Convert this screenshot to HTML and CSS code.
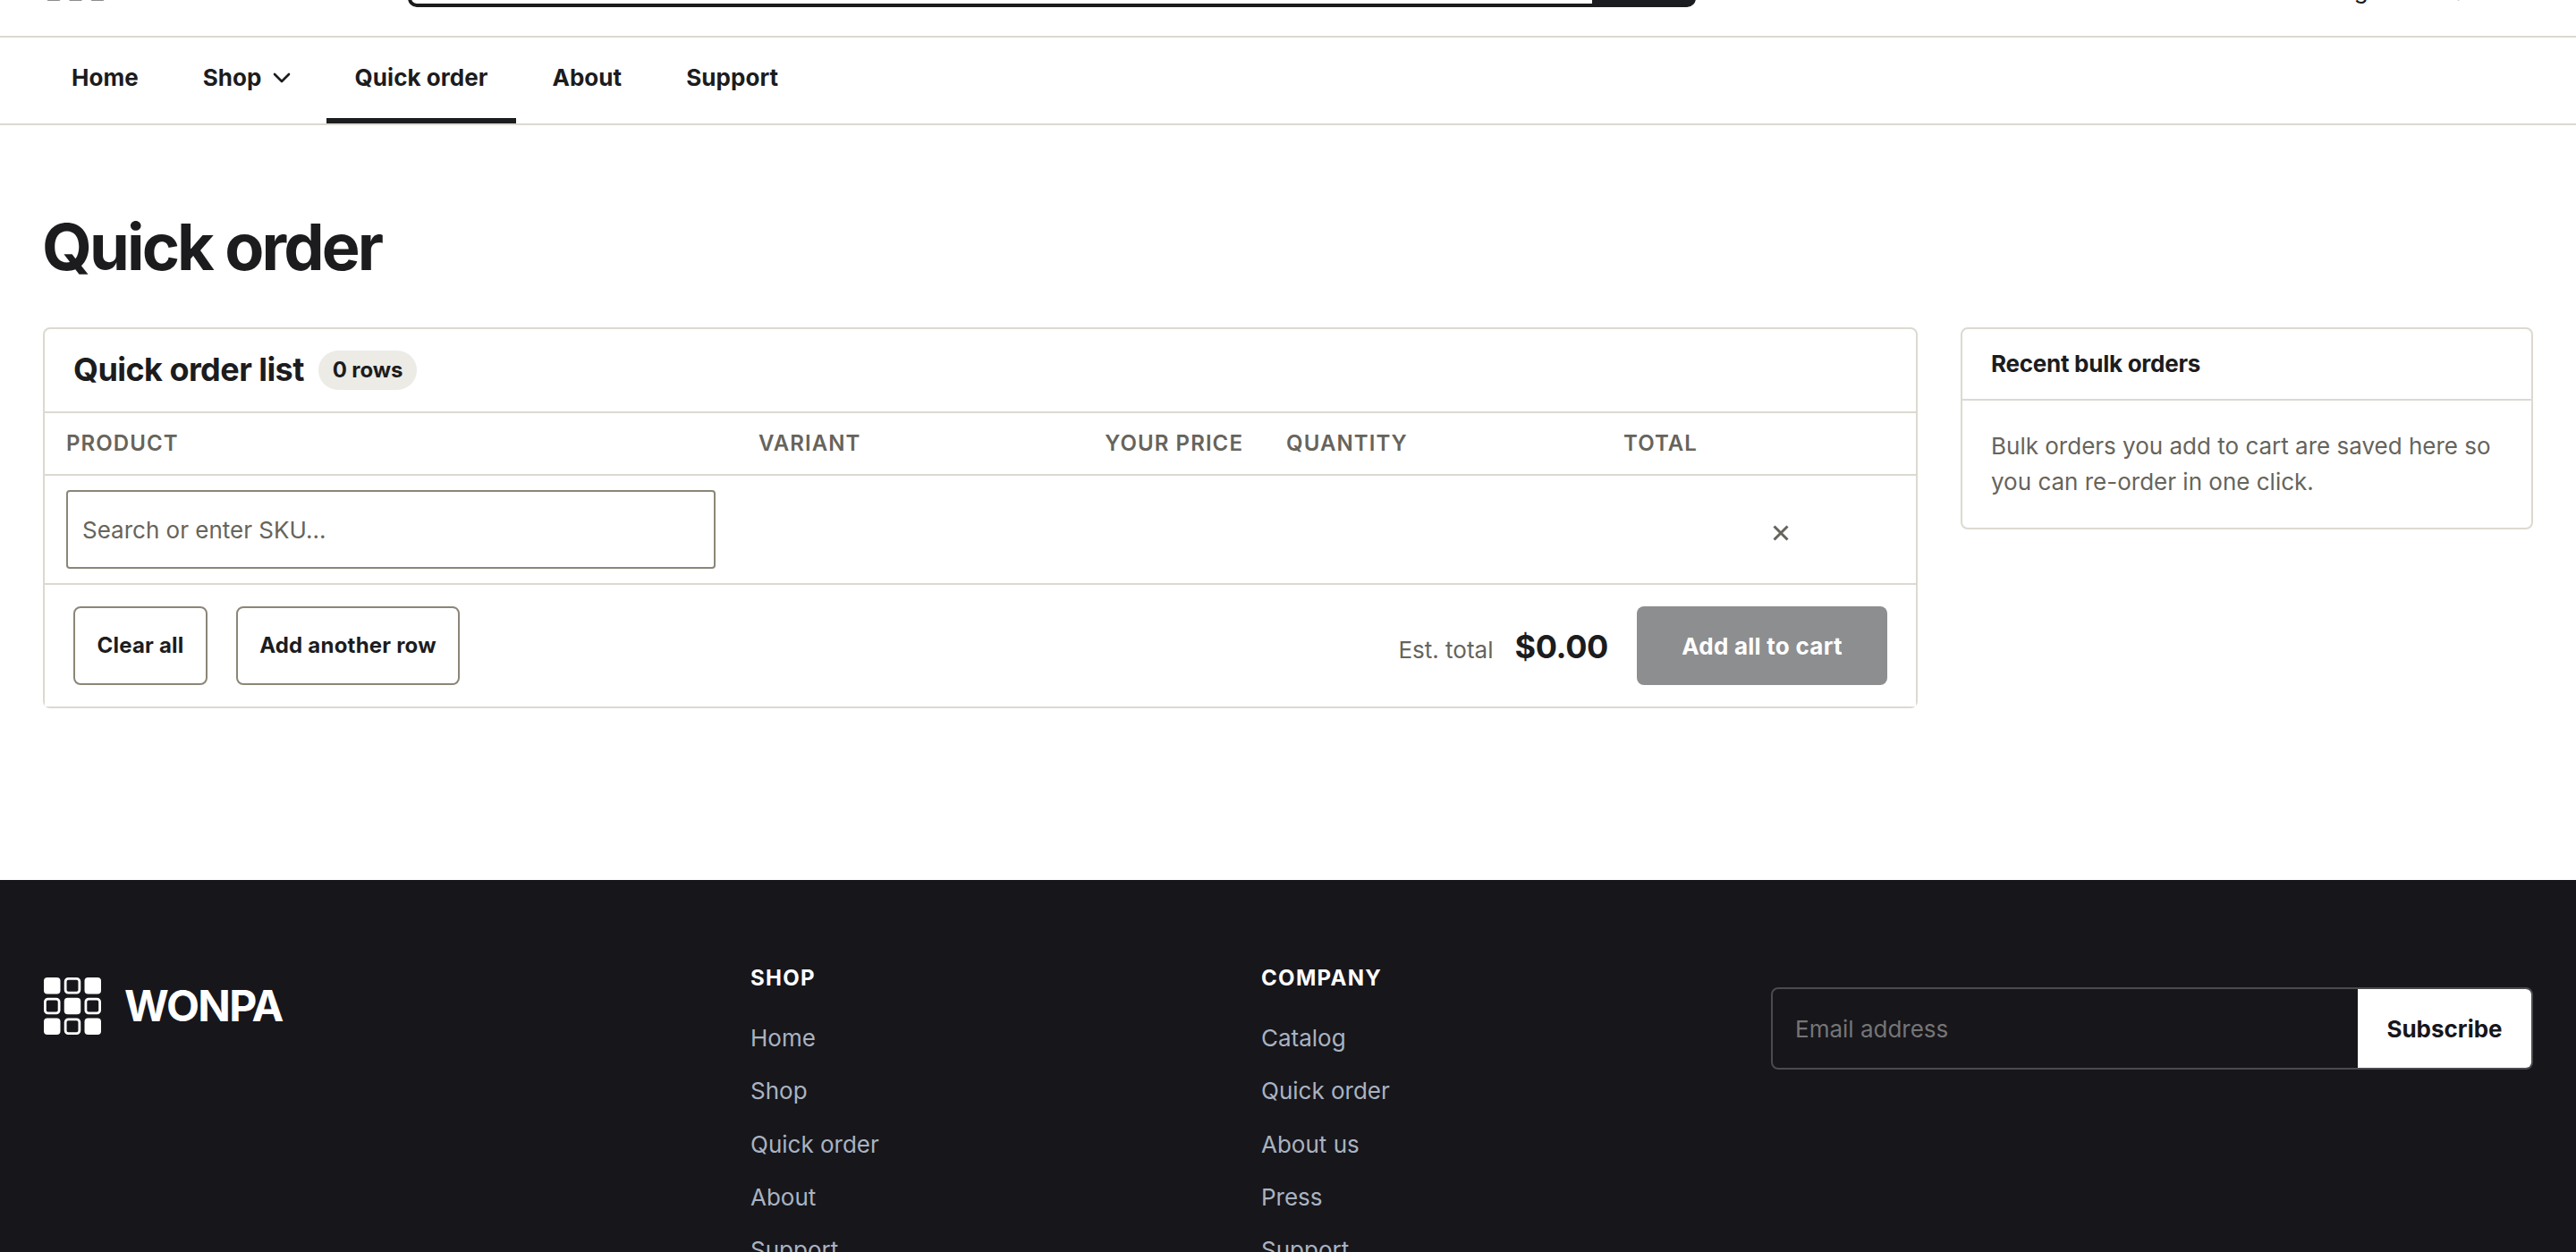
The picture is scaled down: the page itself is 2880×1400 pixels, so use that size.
FILE: index.html
```html
<!DOCTYPE html>
<html lang="en">
<head>
<meta charset="utf-8">
<title>Quick order – Wonpa</title>
<link rel="stylesheet" href="styles.css">
</head>
<body>
<header class="site-header">
  <div class="topbar">
    <svg class="topbar-mark" viewBox="0 0 72 74"><g fill="#1c1c1e"><rect x="3" y="54.600" width="18" height="18" rx="4"/><rect x="27.500" y="54.600" width="18" height="18" rx="4"/><rect x="52" y="54.600" width="18" height="18" rx="4"/></g></svg>
    <div class="search"><span class="search-button"></span></div>
    <div class="account"><span>Sign in</span><span class="cart-sum">$0.00</span></div>
  </div>
  <nav class="nav">
    <a class="nav-item">Home</a>
    <a class="nav-item">Shop<svg class="chevron" viewBox="0 0 24 24"><path d="M4 8l8 8 8-8" fill="none" stroke="currentColor" stroke-width="2.6" stroke-linecap="round" stroke-linejoin="round"/></svg></a>
    <a class="nav-item active">Quick order</a>
    <a class="nav-item">About</a>
    <a class="nav-item">Support</a>
  </nav>
</header>
<main class="page">
  <h1 class="page-title">Quick order</h1>
  <div class="columns">
    <section class="card order">
      <div class="order-head"><h2>Quick order list</h2><span class="badge">0 rows</span></div>
      <div class="grid-row labels">
        <span>Product</span><span>Variant</span><span class="right">Your price</span><span>Quantity</span><span class="right">Total</span><span></span>
      </div>
      <div class="grid-row line">
        <span><input class="sku" type="text" placeholder="Search or enter SKU..."></span>
        <span></span><span></span><span></span><span></span>
        <span><button class="remove" aria-label="Remove row"><svg viewBox="0 0 24 24"><path d="M4.500 4.500l15 15M19.500 4.500l-15 15" fill="none" stroke="currentColor" stroke-width="3"/></svg></button></span>
      </div>
      <div class="order-foot">
        <button class="btn btn-clear">Clear all</button>
        <button class="btn btn-add">Add another row</button>
        <div class="total"><span class="total-label">Est. total</span><strong>$0.00</strong></div>
        <button class="btn-primary">Add all to cart</button>
      </div>
    </section>
    <aside class="card recent">
      <h3>Recent bulk orders</h3>
      <p>Bulk orders you add to cart are saved here so you can re-order in one click.</p>
    </aside>
  </div>
</main>
<footer class="site-footer">
  <div class="brand">
    <svg class="brand-mark" viewBox="0 0 64 64"><g fill="#fff"><rect x="0" y="0" width="18.500" height="18.500" rx="4"/><rect x="45.500" y="0" width="18.500" height="18.500" rx="4"/><rect x="22.750" y="22.750" width="18.500" height="18.500" rx="4"/><rect x="0" y="45.500" width="18.500" height="18.500" rx="4"/><rect x="45.500" y="45.500" width="18.500" height="18.500" rx="4"/></g><g fill="none" stroke="#fff" stroke-width="2.800"><rect x="24.150" y="1.400" width="15.700" height="15.700" rx="3.200"/><rect x="1.400" y="24.150" width="15.700" height="15.700" rx="3.200"/><rect x="46.900" y="24.150" width="15.700" height="15.700" rx="3.200"/><rect x="24.150" y="46.900" width="15.700" height="15.700" rx="3.200"/></g></svg>
    <span class="brand-name">WONPA</span>
  </div>
  <div class="links"><h4>Shop</h4><a>Home</a><a>Shop</a><a>Quick order</a><a>About</a><a>Support</a></div>
  <div class="links"><h4>Company</h4><a>Catalog</a><a>Quick order</a><a>About us</a><a>Press</a><a>Support</a></div>
  <form class="subscribe"><input type="text" placeholder="Email address"><button type="button">Subscribe</button></form>
</footer>
</body>
</html>
```
FILE: styles.css
```css
* { box-sizing: border-box; }
html, body { height: 100%; overflow: hidden; }
body {
  margin: 0;
  background: #fff;
  color: #1c1c1e;
  font: 400 26px/40px Inter, sans-serif;
  display: flex;
  flex-direction: column;
}
h1, h2, h3, h4, p { margin: 0; }
button, input { font-family: inherit; margin: 0; border-radius: 0; }

.site-header { flex: none; }
.topbar {
  height: 42px;
  border-bottom: 2px solid #dcd9d0;
  display: grid;
  grid-template-columns: 408px 1440px 1fr;
  align-items: start;
  padding: 0 48px;
}
.topbar-mark { width: 72px; height: 74px; margin-top: -72px; }
.search {
  height: 88px;
  margin-top: -80px;
  border: 4px solid #1c1c1e;
  border-radius: 10px;
  display: flex;
  justify-content: flex-end;
}
.search-button { width: 112px; background: #1c1d20; }
.account { justify-self: end; margin-top: -31px; display: flex; gap: 48px; }
.cart-sum { width: 92px; font-weight: 600; }

.nav {
  height: 98px;
  padding: 0 48px;
  border-bottom: 2px solid #dcd9d0;
  display: flex;
  gap: 8px;
}
.nav-item {
  display: flex;
  align-items: center;
  gap: 10px;
  padding: 0 32px;
  border-bottom: 6px solid transparent;
  font-weight: 700;
  letter-spacing: 0.002em;
}
.nav-item.active { border-bottom-color: #1c1d1f; }
.chevron { width: 24px; height: 24px; margin-right: -2px; }

.page { padding: 95px 48px 192px; flex: none; }
.page-title { margin: 0 0 49px -1px; font-size: 72px; line-height: 82px; letter-spacing: -0.04em; }
.columns { display: grid; grid-template-columns: 2096px 640px; gap: 48px; align-items: start; }
.card { border: 2px solid #dcd9d0; border-radius: 8px; }

.order-head {
  height: 94px;
  padding: 0 32px;
  border-bottom: 2px solid #dcd9d0;
  display: flex;
  align-items: center;
  gap: 16px;
}
.order-head h2 { padding-bottom: 2px; font-size: 36px; letter-spacing: -0.0155em; font-weight: 700; width: 258px; white-space: nowrap; }
.badge { width: 110px; text-align: center; border-radius: 22px; background: #ecebe6; font-size: 24px; font-weight: 700; letter-spacing: -0.005em; line-height: 44px; }
.grid-row { display: grid; grid-template-columns: 774px 288px 302px 292px 216px 220px; border-bottom: 2px solid #dcd9d0; }
.grid-row > span { padding: 0 24px; }
.labels { height: 70px; line-height: 68px; font-size: 24px; font-weight: 600; letter-spacing: 0.045em; text-transform: uppercase; color: #66645b; }
.right { text-align: right; }
.line { height: 122px; padding: 16px 0; }
.sku {
  width: 726px;
  height: 88px;
  padding: 0 16px;
  border: 2px solid #8b8677;
  border-radius: 4px;
  font-size: 26px;
  display: block;
}
.sku::placeholder { color: #66645b; }
.remove { width: 88px; height: 88px; padding: 7px 0 0 1px; border: 0; background: none; color: #66645b; display: grid; place-items: center; }
.remove svg { width: 24px; height: 24px; }

.order-foot { height: 136px; padding: 0 32px; background: #fff; display: flex; align-items: center; gap: 32px; }
.btn { height: 88px; padding: 0 0 1px; border: 2px solid #8b8677; border-radius: 8px; background: #fff; color: #1c1c1e; font-size: 24px; font-weight: 700; letter-spacing: 0.009em; }
.btn-clear { width: 150px; }
.btn-add { width: 250px; }
.total { margin-left: auto; padding-top: 6px; display: flex; align-items: baseline; gap: 24px; color: #66645b; }
.total strong { font-size: 36px; letter-spacing: -0.01em; color: #1c1c1e; }
.btn-primary { width: 280px; height: 88px; border: 0; border-radius: 8px; background: #8d8e90; color: #fff; font-size: 26px; font-weight: 700; letter-spacing: 0.01em; }

.recent h3 { height: 80px; padding: 0 32px; border-bottom: 2px solid #dcd9d0; font-size: 26px; line-height: 78px; font-weight: 700; letter-spacing: -0.01em; }
.recent p { height: 142px; padding: 31px 32px; color: #66645b; }

.site-footer {
  flex: 1 1 0;
  min-height: 0;
  overflow: hidden;
  background: #17161b;
  padding: 88px 48px 0;
  display: grid;
  grid-template-columns: 743px 523px 522px 852px;
  grid-template-rows: 100%;
  justify-content: space-between;
  align-items: start;
}
.brand { display: flex; align-items: center; gap: 26px; margin-top: 21px; padding-left: 1px; }
.brand-mark { width: 64px; height: 64px; }
.brand-name { font-size: 48px; font-weight: 700; color: #fff; letter-spacing: -0.035em; }
.links { display: flex; flex-direction: column; padding-top: 2px; color: #a9b3c1; }
.links h4 { height: 42px; margin-bottom: 25px; font-size: 24px; font-weight: 700; letter-spacing: 0.055em; text-transform: uppercase; color: #fff; }
.links a { height: 40px; margin-bottom: 19.3px; }
.subscribe { height: 92px; margin-top: 32px; border: 2px solid #4b4a4e; border-radius: 8px; display: flex; overflow: hidden; }
.subscribe input { flex: 1; min-width: 0; padding: 0 25px; border: 0; background: transparent; font-size: 26px; }
.subscribe input::placeholder { color: #757575; }
.subscribe button { width: 194px; padding: 0; border: 0; background: #fff; color: #17161b; font-size: 26px; font-weight: 700; letter-spacing: 0; }
```
